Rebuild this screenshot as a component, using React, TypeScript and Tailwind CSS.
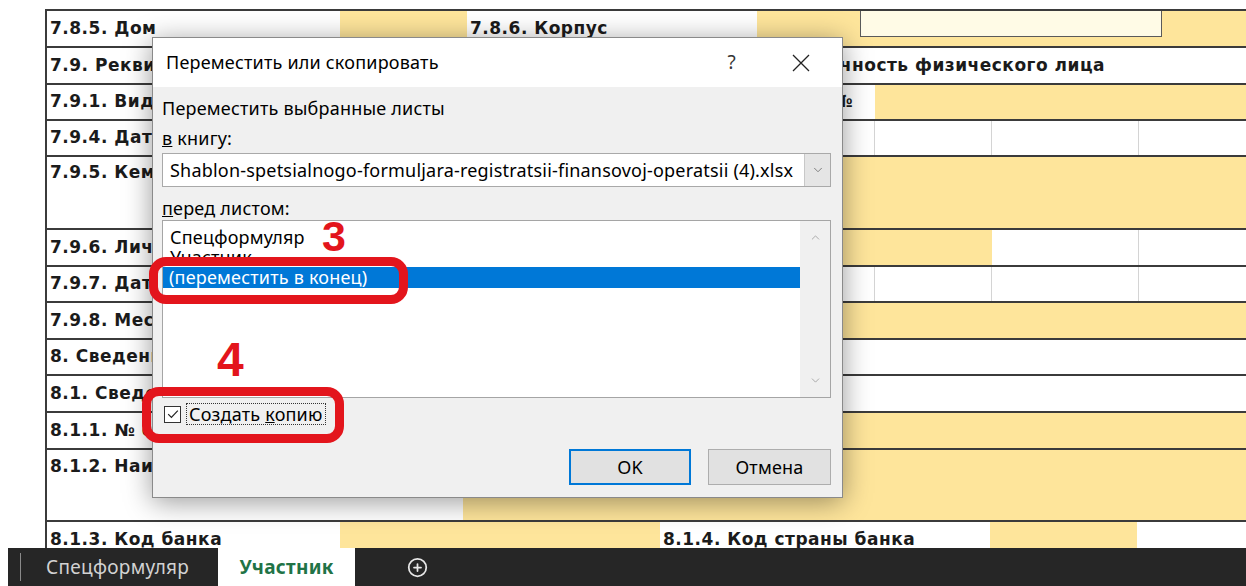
import React from 'react';
import { ChevronDown, ChevronUp, CirclePlus } from 'lucide-react';

// Excel sheet cell
function Cell({ w, fill = 'bg-white', grid = '', align = 'items-center', children }: {
  w: string;
  fill?: string;
  grid?: string;
  align?: string;
  children?: React.ReactNode;
}) {
  return (
    <div className={`flex ${align} ${w} ${fill} ${grid} shrink-0 overflow-hidden whitespace-nowrap pl-[3px]`}>
      {children}
    </div>
  );
}

function Row({ h, children }: { h: string; children: React.ReactNode }) {
  return <div className={`flex ${h} shrink-0 border-b-2 border-[#3b3b3b]`}>{children}</div>;
}

const Y = 'bg-[#fee59b]';
const G = 'border-r border-[#d4d4d4]';

function Sheet() {
  return (
    <div className="h-[539px] mt-[9px] ml-[45px] overflow-hidden border-l-2 border-t-2 border-[#3b3b3b] font-['DejaVu_Sans',sans-serif] text-[17px] tracking-[0.5px] font-bold text-[#1b1b1b]">
      <Row h="h-[37px]">
        <Cell w="w-[293px]">7.8.5. Дом</Cell>
        <Cell w="w-[127px]" fill={Y} />
        <Cell w="w-[290px]">7.8.6. Корпус</Cell>
        <div className={`relative flex-1 ${Y}`}>
          {/* cell editor box */}
          <div className="absolute left-[103px] top-[-2px] w-[302px] h-[28px] bg-[#fffbe6] border border-[#5a5a5a]" />
        </div>
      </Row>
      <Row h="h-[37px]">
        <div className="flex flex-1 items-center justify-between pl-[3px] pr-[141px] bg-white whitespace-nowrap overflow-hidden">
          <span>7.9. Реквизиты документа,</span>
          <span>удостоверяющего личность физического лица</span>
        </div>
      </Row>
      <Row h="h-[36px]">
        <div className="flex w-[828px] items-center justify-between pl-[3px] pr-[22px] bg-white whitespace-nowrap overflow-hidden">
          <span>7.9.1. Вид документа</span>
          <span>№</span>
        </div>
        <Cell w="flex-1" fill={Y} />
      </Row>
      <Row h="h-[36px]">
        <Cell w="w-[828px]" grid={G}>7.9.4. Дата выдачи</Cell>
        <Cell w="w-[117px]" grid={G} />
        <Cell w="w-[147px]" grid={G} />
        <Cell w="flex-1" />
      </Row>
      <Row h="h-[73px]">
        <Cell w="w-[293px]" align="items-start pt-[3px]">7.9.5. Кем выдан</Cell>
        <Cell w="flex-1" fill={Y} />
      </Row>
      <Row h="h-[37px]">
        <Cell w="w-[293px]">7.9.6. Личный код</Cell>
        <Cell w="w-[652px]" fill={Y} />
        <Cell w="w-[147px]" grid={G} />
        <Cell w="flex-1" />
      </Row>
      <Row h="h-[36px]">
        <Cell w="w-[828px]" grid={G}>7.9.7. Дата рождения</Cell>
        <Cell w="w-[117px]" grid={G} />
        <Cell w="w-[147px]" grid={G} />
        <Cell w="flex-1" />
      </Row>
      <Row h="h-[37px]">
        <Cell w="w-[293px]">7.9.8. Место рождения</Cell>
        <Cell w="flex-1" fill={Y} />
      </Row>
      <Row h="h-[36px]">
        <Cell w="flex-1">8. Сведения о банке</Cell>
      </Row>
      <Row h="h-[37px]">
        <Cell w="flex-1">8.1. Сведения о счете</Cell>
      </Row>
      <Row h="h-[37px]">
        <Cell w="w-[416px]">8.1.1. № счета</Cell>
        <Cell w="flex-1" fill={Y} />
      </Row>
      <Row h="h-[72px]">
        <Cell w="w-[416px]" align="items-start pt-[4px]">8.1.2. Наименование банка</Cell>
        <Cell w="flex-1" fill={Y} />
      </Row>
      <Row h="h-[37px]">
        <Cell w="w-[293px]">8.1.3. Код банка</Cell>
        <Cell w="w-[320px]" fill={Y} />
        <Cell w="w-[330px]">8.1.4. Код страны банка</Cell>
        <Cell w="w-[147px]" fill={Y} />
        <Cell w="flex-1" />
      </Row>
    </div>
  );
}

function MoveCopyDialog() {
  return (
    <div className="absolute left-[152px] top-[37px] w-[691px] h-[461px] flex flex-col border border-[#8a8a8a] bg-[#f0f0f0] shadow-[0_4px_26px_rgba(0,0,0,0.4)] font-['Noto_Sans',sans-serif] text-[18px] tracking-[0.2px] text-black">
      <div className="flex h-[49px] items-center bg-white pl-[13px] pr-[32px]">
        <span>Переместить или скопировать</span>
        <span className="ml-auto text-[19px] text-[#333]">?</span>
        <svg viewBox="0 0 18 18" className="ml-[56px] h-[18px] w-[18px]">
          <path d="M1 1 L17 17 M17 1 L1 17" stroke="#222" strokeWidth="1.3" />
        </svg>
      </div>
      <div className="flex flex-col pl-[9px] pr-[11px]">
        <div className="mt-[11px] h-[20px] leading-[20px]">Переместить выбранные листы</div>
        <div className="mt-[10px] h-[20px] leading-[20px]"><u>в</u> книгу:</div>
        <div className="mt-[5px] flex h-[34px] items-stretch border border-[#a9a9a9] bg-white">
          <div className="flex flex-1 items-center overflow-hidden whitespace-nowrap pl-[7px]">Shablon-spetsialnogo-formuljara-registratsii-finansovoj-operatsii (4).xlsx</div>
          <div className="flex w-[26px] items-center justify-center border-l border-[#c8c8c8] bg-[#e5e5e5]">
            <ChevronDown className="h-[14px] w-[14px] text-[#777]" strokeWidth={1.6} />
          </div>
        </div>
        <div className="mt-[11px] h-[20px] leading-[20px]"><u>п</u>еред листом:</div>
        <div className="mt-[2px] flex h-[178px] border border-[#a5a5a5] bg-white">
          <div className="flex flex-1 flex-col pt-[6px]">
            <div className="h-[20px] pl-[7px] leading-[20px]">Спецформуляр</div>
            <div className="h-[20px] overflow-hidden pl-[7px] leading-[20px]">Участник</div>
            <div className="h-[21px] bg-[#0078d7] pl-[6px] leading-[21px] text-white">(переместить в конец)</div>
          </div>
          <div className="flex w-[30px] flex-col items-center justify-between bg-[#f0f0f0] py-[10px]">
            <ChevronUp className="h-[13px] w-[13px] text-[#a0a0a0]" strokeWidth={1.6} />
            <ChevronDown className="h-[13px] w-[13px] text-[#a0a0a0]" strokeWidth={1.6} />
          </div>
        </div>
        <div className="mt-[6px] flex h-[20px] items-center">
          <div className="ml-[2px] flex h-[17px] w-[17px] items-center justify-center border border-[#333] bg-white">
            <svg viewBox="0 0 16 16" className="h-[14px] w-[14px]">
              <path d="M2.5 8.2 L6.2 11.8 L13.5 4.2" fill="none" stroke="#222" strokeWidth="1.4" />
            </svg>
          </div>
          <span className="ml-[5px] border border-dotted border-[#333] px-[2px] leading-[20px]">Создать <u>к</u>опию</span>
        </div>
        <div className="mt-[25px] flex justify-end gap-[17px]">
          <button className="h-[36px] w-[122px] border-2 border-[#0078d7] bg-[#e1e1e1]">OK</button>
          <button className="h-[36px] w-[123px] border border-[#adadad] bg-[#e1e1e1]">Отмена</button>
        </div>
      </div>
    </div>
  );
}

function Annotations() {
  return (
    <>
      <div className="absolute left-[149px] top-[257px] h-[47px] w-[259px] rounded-[17px] border-[9px] border-[#e3151c]" />
      <div className="absolute left-[142px] top-[387px] h-[56px] w-[202px] rounded-[17px] border-[9px] border-[#e3151c]" />
      <span className="absolute left-[322px] top-[215px] font-['Liberation_Sans',sans-serif] text-[43px] font-bold leading-none text-[#e3151c]">3</span>
      <span className="absolute left-[217px] top-[336px] font-['Liberation_Sans',sans-serif] text-[48px] font-bold leading-none text-[#e3151c]">4</span>
    </>
  );
}

function SheetTabs() {
  return (
    <div className="flex h-[38px] bg-white pl-[8px]">
      <div className="flex flex-1 items-stretch bg-[#262626] font-['Noto_Sans',sans-serif] text-[19px] tracking-[0.3px]">
        <div className="my-[5px] ml-[12px] w-px bg-[#8a8a8a]" />
        <div className="flex items-center pl-[25px] pr-[29px] text-[#d2d2d2]">Спецформуляр</div>
        <div className="flex w-[137px] items-center justify-center bg-white font-bold text-[#217346]">Участник</div>
        <div className="flex items-center pl-[52px]">
          <CirclePlus className="h-[21px] w-[21px] text-[#e8e8e8]" strokeWidth={2} />
        </div>
      </div>
    </div>
  );
}

export default function App() {
  return (
    <div className="relative flex h-[586px] w-[1246px] flex-col overflow-hidden bg-white">
      <Sheet />
      <SheetTabs />
      <MoveCopyDialog />
      <Annotations />
    </div>
  );
}
